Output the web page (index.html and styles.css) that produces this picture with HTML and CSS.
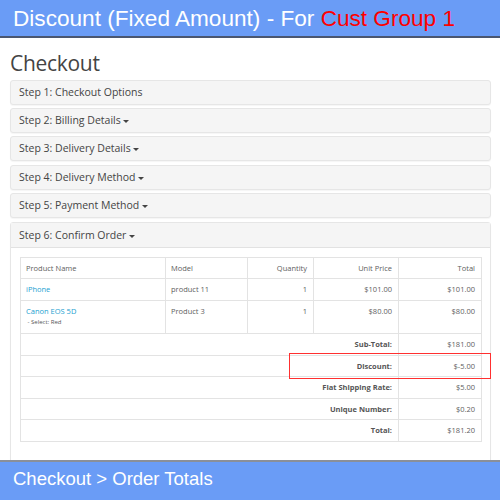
FILE: index.html
```html
<!DOCTYPE html>
<html>
<head>
<meta charset="utf-8">
<link rel="stylesheet" href="styles.css">
</head>
<body>
<div class="page">
  <header class="banner">Discount (Fixed Amount) - For <span class="red">Cust Group 1</span></header>
  <main class="main">
    <h1 class="title">Checkout</h1>
    <div class="panel"><div class="ph">Step 1: Checkout Options</div></div>
    <div class="panel"><div class="ph">Step 2: Billing Details <span class="caret"></span></div></div>
    <div class="panel"><div class="ph">Step 3: Delivery Details <span class="caret"></span></div></div>
    <div class="panel"><div class="ph">Step 4: Delivery Method <span class="caret"></span></div></div>
    <div class="panel"><div class="ph">Step 5: Payment Method <span class="caret"></span></div></div>
    <div class="panel open">
      <div class="ph">Step 6: Confirm Order <span class="caret"></span></div>
      <div class="pb">
        <table class="tbl">
          <colgroup>
            <col class="c1"><col class="c2"><col class="c3"><col class="c4"><col class="c5">
          </colgroup>
          <thead>
            <tr><td>Product Name</td><td>Model</td><td class="r">Quantity</td><td class="r">Unit Price</td><td class="r">Total</td></tr>
          </thead>
          <tbody>
            <tr><td><a class="lnk">iPhone</a></td><td>product 11</td><td class="r">1</td><td class="r">$101.00</td><td class="r">$101.00</td></tr>
            <tr class="top"><td><a class="lnk">Canon EOS 5D</a><br><span class="opt">&nbsp;- Select: Red</span></td><td>Product 3</td><td class="r">1</td><td class="r">$80.00</td><td class="r">$80.00</td></tr>
          </tbody>
          <tfoot>
            <tr><td colspan="4" class="r lbl">Sub-Total:</td><td class="r">$181.00</td></tr>
            <tr><td colspan="4" class="r lbl">Discount:</td><td class="r">$-5.00</td></tr>
            <tr><td colspan="4" class="r lbl">Flat Shipping Rate:</td><td class="r">$5.00</td></tr>
            <tr><td colspan="4" class="r lbl">Unique Number:</td><td class="r">$0.20</td></tr>
            <tr><td colspan="4" class="r lbl">Total:</td><td class="r">$181.20</td></tr>
          </tfoot>
        </table>
      </div>
    </div>
  </main>
  <footer class="foot">Checkout &gt; Order Totals</footer>
  <div class="highlight"></div>
</div>
</body>
</html>
```
FILE: styles.css
```css
html, body {
  margin: 0;
  padding: 0;
  background: #fff;
}
.page {
  position: relative;
  width: 500px;
  height: 500px;
  overflow: hidden;
  display: flex;
  flex-direction: column;
}
.banner {
  height: 36px;
  line-height: 37px;
  background: #6a9cf6;
  border-bottom: 2px solid #4a5670;
  color: #fff;
  font-family: "Liberation Sans", Arial, sans-serif;
  font-size: 22.6px;
  padding-left: 13px;
  white-space: nowrap;
  flex: none;
}
.red { color: #f00; }
.main {
  flex: 1;
  overflow: hidden;
  padding: 0 9px 0 10px;
  font-family: "Open Sans", sans-serif;
}
.title {
  margin: 12px 0 3.7px 0;
  font-weight: normal;
  font-size: 21px;
  letter-spacing: -0.3px;
  line-height: 26px;
  color: #444;
}
.panel {
  background: #f5f5f5;
  border: 1px solid #e6e6e6;
  border-radius: 3px;
  margin-bottom: 3.4px;
  box-shadow: 0 1px 1px rgba(0,0,0,0.04);
}
.ph {
  height: 23px;
  line-height: 23px;
  padding-left: 8px;
  font-size: 10.5px;
  color: #444;
}
.caret {
  display: inline-block;
  width: 0;
  height: 0;
  border-top: 3.5px solid #444;
  border-left: 3px solid transparent;
  border-right: 3px solid transparent;
  vertical-align: 1px;
  margin-left: 0;
}
.open { background: #fff; }
.open .ph {
  background: #f5f5f5;
  border-bottom: 1px solid #e2e2e2;
  height: 24px;
  line-height: 24px;
}
.pb {
  padding: 9px 9px 20px 9px;
}
.tbl {
  width: 461px;
  table-layout: fixed;
  border-collapse: collapse;
  font-size: 7.5px;
  color: #606060;
}
.c1 { width: 145px; }
.c2 { width: 82px; }
.c3 { width: 66px; }
.c4 { width: 85px; }
.c5 { width: 83px; }
.tbl td {
  border: 1px solid #e3e3e3;
  padding: 5.25px 5px;
  line-height: 10px;
  vertical-align: middle;
  white-space: nowrap;
}
.tbl td.r { text-align: right; padding-right: 6px; }
.tbl tr.top td { vertical-align: top; }
.lnk { color: #23a1d1; }
.opt { font-size: 6px; line-height: 11px; color: #555; }
.lbl { font-weight: bold; color: #555; }
.foot {
  flex: none;
  height: 34px;
  line-height: 34px;
  padding-bottom: 4px;
  background: #6a9cf6;
  border-top: 2px solid #8a8f99;
  color: #fff;
  font-family: "Liberation Sans", Arial, sans-serif;
  font-size: 18.5px;
  padding-left: 13px;
}
.highlight {
  position: absolute;
  left: 289px;
  top: 353px;
  width: 200px;
  height: 24px;
  border: 1.5px solid #ff3030;
}
```
